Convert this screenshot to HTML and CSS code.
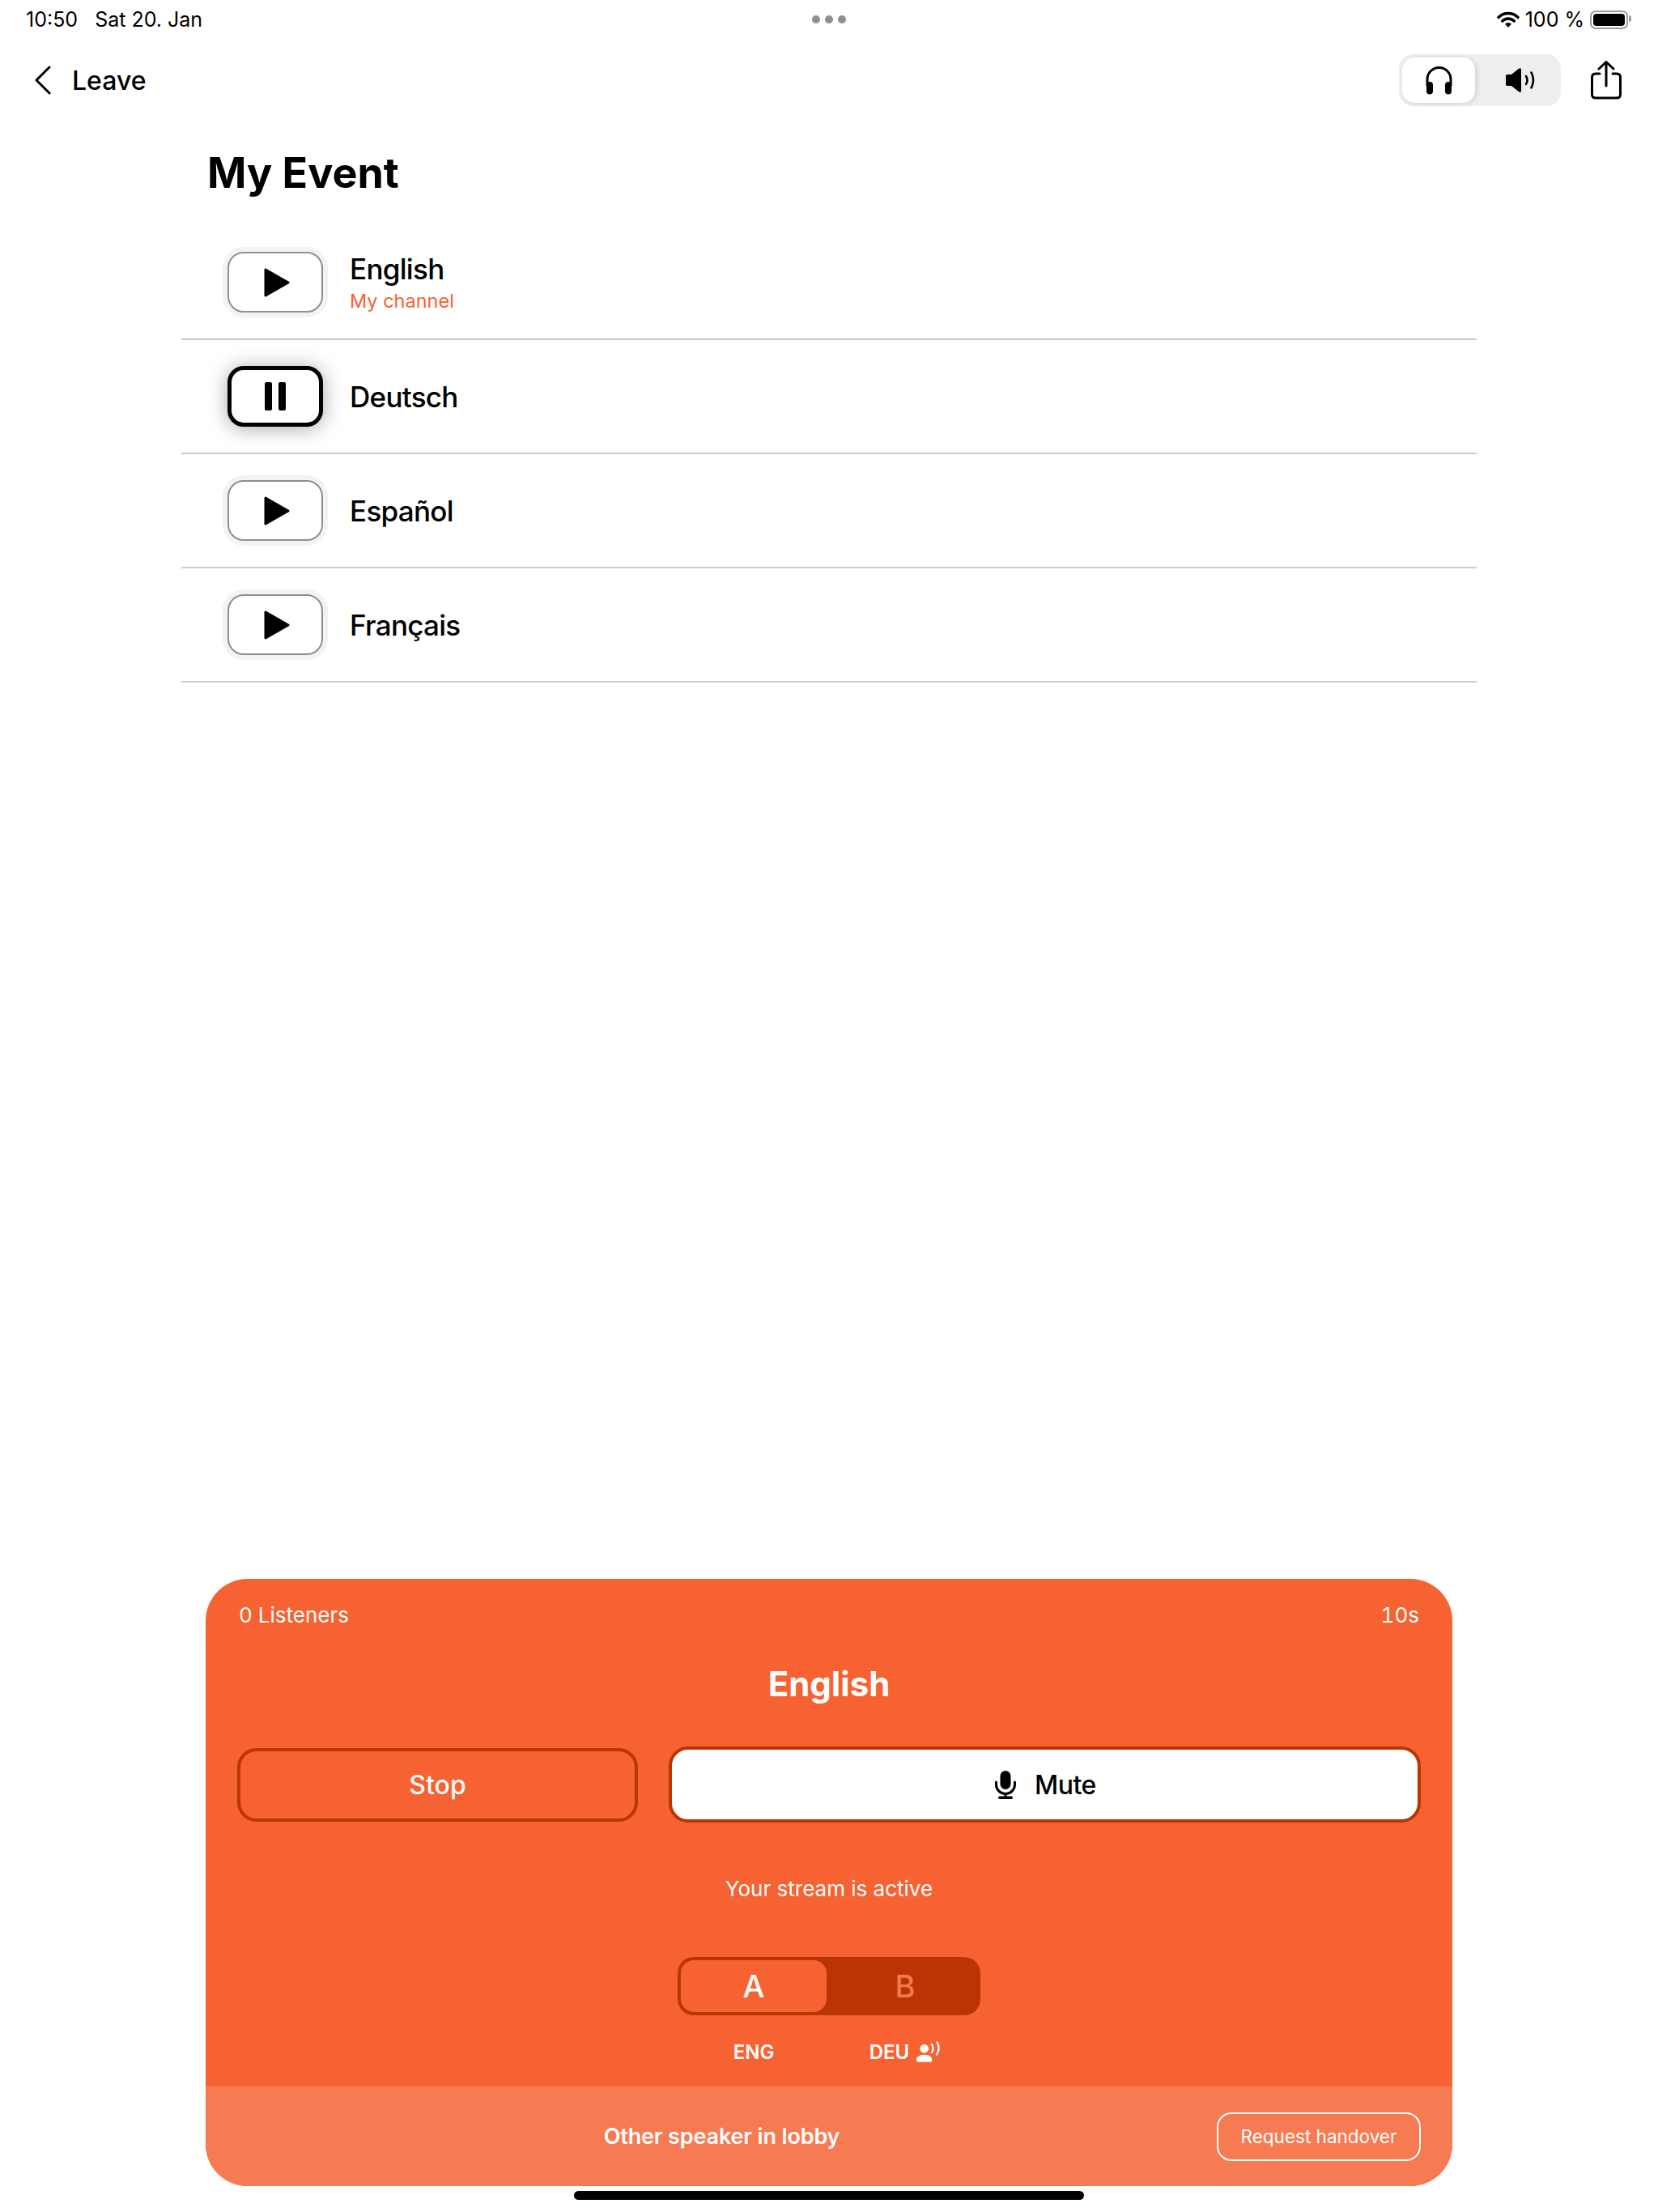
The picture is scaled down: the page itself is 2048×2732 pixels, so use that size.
FILE: index.html
```html
<!DOCTYPE html>
<html lang="en">
<head>
    <meta charset="UTF-8">
    <meta name="viewport" content="width=device-width, initial-scale=1.0">
    <title>My Event</title>
    <link rel="stylesheet" href="styles.css">
</head>
<body>
    <div class="status-bar">
        <div class="status-left">
            <span>10:50</span>
            <span>Sat 20. Jan</span>
        </div>
        <div class="dots"><i></i><i></i><i></i></div>
        <div class="status-right">
            <svg class="wifi" width="28" height="20" viewBox="0 0 28 20">
                <path d="M2 7.5a17 17 0 0 1 24 0" fill="none" stroke="#000" stroke-width="3.4" stroke-linecap="round"/>
                <path d="M6.6 12a10.5 10.5 0 0 1 14.8 0" fill="none" stroke="#000" stroke-width="3.4" stroke-linecap="round"/>
                <path d="M10 15.6a5.6 5.6 0 0 1 8 0L14 20z"/>
            </svg>
            <span>100 %</span>
            <div class="battery"><div class="battery-fill"></div></div>
        </div>
    </div>

    <div class="nav">
        <div class="leave">
            <svg width="21" height="36" viewBox="0 0 21 36">
                <path d="M19 2L3 18l16 16" fill="none" stroke="#000" stroke-width="3" stroke-linecap="round" stroke-linejoin="round"/>
            </svg>
            <span>Leave</span>
        </div>
        <div class="nav-right">
            <div class="output-switch">
                <div class="output-option active">
                    <svg width="35" height="36" viewBox="0 0 35 36">
                        <path d="M3 25v-8a14.5 14.5 0 0 1 29 0v8" fill="none" stroke="#000" stroke-width="3"/>
                        <rect x="2" y="20" width="8" height="15.5" rx="4"/>
                        <rect x="25" y="20" width="8" height="15.5" rx="4"/>
                    </svg>
                </div>
                <div class="output-option speaker">
                    <svg width="38" height="30" viewBox="0 0 38 30">
                        <path d="M1 9.5Q1 8 3 8h5l9-7.2Q20 -1 20 2v26q0 3-3 1.2L8 22H3q-2 0-2-1.5z"/>
                        <path d="M26 10q3 5 0 10M32.500 5.500q5 9.500 0 19" fill="none" stroke="#000" stroke-width="2.600" stroke-linecap="round"/>
                    </svg>
                </div>
            </div>
            <svg class="share" width="38" height="48" viewBox="0 0 38 48">
                <path d="M11 16H6q-4.500 0-4.500 4.500v21Q1.500 46 6 46h26q4.500 0 4.500-4.500v-21Q36.500 16 32 16h-5" fill="none" stroke="#000" stroke-width="3" stroke-linecap="round"/>
                <path d="M19 31V2M10 10l9-8.500L28 10" fill="none" stroke="#000" stroke-width="3" stroke-linecap="round" stroke-linejoin="round"/>
            </svg>
        </div>
    </div>

    <h1 class="event-title">My Event</h1>

    <div class="channel-list">
        <div class="channel">
            <div class="play-btn">
                <svg width="32" height="36" viewBox="0 0 32 36"><path d="M2 2l28 16L2 34z" stroke="#000" stroke-width="3" stroke-linejoin="round"/></svg>
            </div>
            <div class="channel-text">
                <div class="channel-name">English</div>
                <div class="channel-note">My channel</div>
            </div>
        </div>
        <div class="channel">
            <div class="play-btn playing">
                <svg width="26" height="35" viewBox="0 0 26 35"><rect width="9" height="35" rx="2"/><rect x="17" width="9" height="35" rx="2"/></svg>
            </div>
            <div class="channel-name">Deutsch</div>
        </div>
        <div class="channel">
            <div class="play-btn">
                <svg width="32" height="36" viewBox="0 0 32 36"><path d="M2 2l28 16L2 34z" stroke="#000" stroke-width="3" stroke-linejoin="round"/></svg>
            </div>
            <div class="channel-name">Español</div>
        </div>
        <div class="channel">
            <div class="play-btn">
                <svg width="32" height="36" viewBox="0 0 32 36"><path d="M2 2l28 16L2 34z" stroke="#000" stroke-width="3" stroke-linejoin="round"/></svg>
            </div>
            <div class="channel-name">Français</div>
        </div>
    </div>

    <div class="panel">
        <div class="panel-main">
            <div class="panel-head">
                <span>0 Listeners</span>
                <span>10s</span>
            </div>
            <h2 class="panel-title">English</h2>
            <div class="panel-buttons">
                <div class="btn-stop">Stop</div>
                <div class="btn-mute">
                    <svg width="26" height="35" viewBox="0 0 26 35">
                        <rect x="6.500" y="0" width="13" height="23" rx="6.500"/>
                        <path d="M1.500 14v3a11.500 11.500 0 0 0 23 0v-3" fill="none" stroke="#000" stroke-width="3" stroke-linecap="round"/>
                        <path d="M13 28.500V33" stroke="#000" stroke-width="3"/>
                        <rect x="4" y="31.500" width="18" height="3.500" rx="1.700"/>
                    </svg>
                    <span>Mute</span>
                </div>
            </div>
            <div class="stream-status">Your stream is active</div>
            <div class="ab-switch">
                <div class="ab-option active">A</div>
                <div class="ab-option">B</div>
            </div>
            <div class="ab-labels">
                <div class="ab-label">ENG</div>
                <div class="ab-label second">
                    <span>DEU</span>
                    <svg width="29" height="26" viewBox="0 0 29 26">
                        <circle cx="9.700" cy="9.300" r="5.300" fill="#fff"/>
                        <path d="M0 23.500C0 19 4 16.700 9.700 16.700S19.400 19 19.400 23.500Q19.400 25.700 17.500 25.700H2Q0 25.700 0 23.500z" fill="#fff"/>
                        <path d="M19 4q3 5 0 10M25.500 1.200q4.500 8-0.500 15.500" fill="none" stroke="#fff" stroke-width="2.300" stroke-linecap="round"/>
                    </svg>
                </div>
            </div>
        </div>
        <div class="panel-footer">
            <div class="lobby-text">Other speaker in lobby</div>
            <div class="btn-handover">Request handover</div>
        </div>
    </div>

    <div class="home-indicator"></div>
</body>
</html>
```

FILE: styles.css
```css
* {
    margin: 0;
    padding: 0;
    box-sizing: border-box;
    font-family: Inter, "Noto Sans", sans-serif;
}

body {
    display: flex;
    flex-direction: column;
    height: 2732px;
    overflow: hidden;
    background-color: #ffffff;
    color: #000000;
}

svg {
    display: block;
    flex-shrink: 0;
}

/* status bar */
.status-bar {
    display: grid;
    grid-template-columns: 1fr auto 1fr;
    align-items: center;
    height: 48px;
    padding: 0 32px;
    font-size: 25px;
}

.status-left {
    display: flex;
    gap: 21px;
}

.dots {
    display: flex;
    gap: 6px;
}

.dots i {
    width: 10px;
    height: 10px;
    border-radius: 50%;
    background-color: #8e8e93;
}

.status-right {
    display: flex;
    justify-content: flex-end;
    align-items: center;
    gap: 7px;
    padding-right: 5px;
}

.battery {
    position: relative;
    width: 47px;
    height: 23px;
    padding: 2px;
    border: 2px solid #9b9b9b;
    border-radius: 7px;
}

.battery::after {
    content: "";
    position: absolute;
    top: 4px;
    right: -6px;
    width: 3px;
    height: 8px;
    border-radius: 0 3px 3px 0;
    background-color: #9b9b9b;
}

.battery-fill {
    height: 100%;
    border-radius: 4px;
    background-color: #000000;
}

/* nav */
.nav {
    display: flex;
    justify-content: space-between;
    align-items: center;
    height: 102px;
    padding: 0 45px 0 42px;
}

.leave {
    display: flex;
    align-items: center;
    gap: 26px;
    font-size: 32px;
    font-weight: 500;
}

.nav-right {
    display: flex;
    align-items: center;
    gap: 37px;
}

.output-switch {
    display: flex;
    width: 200px;
    height: 64px;
    padding: 4px;
    border-radius: 18px;
    background-color: #eeeeee;
}

.output-option {
    display: flex;
    justify-content: center;
    align-items: center;
    width: 90px;
    border-radius: 15px;
}

.output-option.speaker {
    flex: 1;
    padding-left: 10px;
}

.output-option.active {
    background-color: #ffffff;
    box-shadow: 2px 1px 6px rgba(0, 0, 0, 0.12);
}

/* channels */
.event-title {
    height: 129px;
    padding-left: 256px;
    font-size: 52px;
    font-weight: 700;
    line-height: 128px;
}

.channel-list {
    margin: 0 224px;
}

.channel {
    display: flex;
    align-items: center;
    gap: 33px;
    height: 141px;
    padding-left: 57px;
    border-bottom: 2px solid #cbcbcd;
}

.play-btn {
    display: flex;
    justify-content: center;
    align-items: center;
    width: 118px;
    height: 75px;
    padding-left: 3px;
    border: 2px solid #8e8e93;
    border-radius: 20px;
    box-shadow: 0 0 0 6px #f2f2f7;
}

.play-btn.playing {
    padding-left: 0;
    border: 5px solid #000000;
    box-shadow: 0 2px 24px rgba(0, 0, 0, 0.35);
}

.channel-name {
    font-size: 35px;
    font-weight: 500;
    letter-spacing: -0.7px;
}

.channel-text {
    padding-bottom: 1px;
}

.channel-text .channel-name {
    line-height: 44px;
}

.channel-note {
    margin-top: 3px;
    color: #f66231;
    font-size: 23.5px;
    line-height: 30px;
}

/* live panel */
.panel {
    margin: auto 254px 0;
    overflow: hidden;
    border-radius: 52px;
    background-color: #f66231;
    color: #ffffff;
}

.panel-main {
    display: flex;
    flex-direction: column;
    align-items: center;
    padding: 0 39px 22px;
}

.panel-head {
    display: flex;
    justify-content: space-between;
    align-items: center;
    align-self: stretch;
    height: 88px;
    padding: 0 2px;
    font-size: 26px;
    font-variant-numeric: tabular-nums;
}

.panel-title {
    font-size: 42px;
    font-weight: 700;
    line-height: 84px;
}

.panel-buttons {
    display: grid;
    grid-template-columns: 495px 1fr;
    gap: 38px;
    align-items: center;
    align-self: stretch;
    margin-top: 35px;
}

.btn-stop,
.btn-mute {
    display: flex;
    justify-content: center;
    align-items: center;
    border: 4px solid #bb3504;
    font-size: 32px;
    font-weight: 500;
}

.btn-stop {
    height: 91px;
    border-radius: 24px;
}

.btn-mute {
    gap: 23px;
    height: 94px;
    padding-left: 2px;
    border-radius: 24px;
    background-color: #ffffff;
    color: #000000;
    letter-spacing: -0.5px;
}

.stream-status {
    margin-top: 62px;
    font-size: 26px;
    line-height: 40px;
}

.ab-switch {
    display: flex;
    width: 374px;
    height: 72px;
    margin-top: 64px;
    padding: 4px;
    border-radius: 20px;
    background-color: #bb3504;
    color: #f4794f;
    font-size: 38px;
    font-weight: 500;
}

.ab-option {
    display: flex;
    flex: 1;
    justify-content: center;
    align-items: center;
    padding-left: 8px;
}

.ab-option.active {
    flex: none;
    width: 180px;
    padding-left: 0;
    border-radius: 16px;
    background-color: #f66231;
    color: #ffffff;
}

.ab-labels {
    display: flex;
    width: 374px;
    height: 42px;
    margin-top: 24px;
    padding: 0 4px;
    font-size: 24px;
    font-weight: 600;
}

.ab-label {
    display: flex;
    justify-content: center;
    align-items: center;
    width: 180px;
}

.ab-label.second {
    flex: 1;
    gap: 9px;
    padding-left: 7px;
}

.panel-footer {
    display: flex;
    align-items: center;
    height: 123px;
    padding-right: 39px;
    background-color: #f77b52;
}

.lobby-text {
    flex: 1;
    padding-left: 26px;
    font-size: 27px;
    font-weight: 600;
    letter-spacing: -0.15px;
    text-align: center;
}

.btn-handover {
    width: 252px;
    height: 60px;
    border: 2px solid #ffffff;
    border-radius: 18px;
    font-size: 22.5px;
    line-height: 56px;
    text-align: center;
}

.home-indicator {
    flex-shrink: 0;
    width: 630px;
    height: 11px;
    margin: 6px auto 15px;
    border-radius: 6px;
    background-color: #000000;
}
```
